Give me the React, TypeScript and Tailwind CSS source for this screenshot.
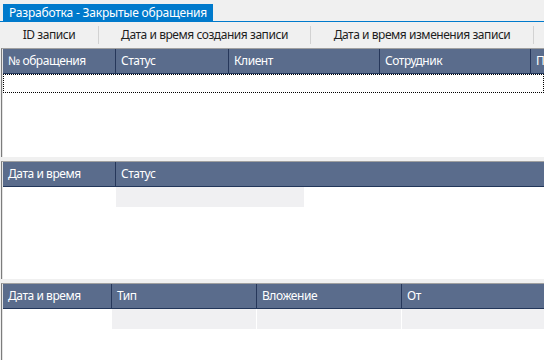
import React from 'react';

type Col = { label: string; width: number };

const mainCols: Col[] = [
    { label: '№ обращения', width: 113 },
    { label: 'Статус', width: 113 },
    { label: 'Клиент', width: 151 },
    { label: 'Сотрудник', width: 151 },
    { label: 'П', width: 60 },
];

const historyCols: Col[] = [
    { label: 'Дата и время', width: 113 },
    { label: 'Статус', width: 440 },
];

const attachCols: Col[] = [
    { label: 'Дата и время', width: 109 },
    { label: 'Тип', width: 145 },
    { label: 'Вложение', width: 145 },
    { label: 'От', width: 160 },
];

function Header({ cols }: { cols: Col[] }) {
    return (
        <div className="flex h-[25px] shrink-0 bg-[#5a6c8c] border-b border-[#22365a] text-white">
            {cols.map((c, i) => (
                <div
                    key={i}
                    style={{ width: c.width }}
                    className={`shrink-0 flex items-center px-[5px] whitespace-nowrap overflow-hidden ${i < cols.length - 1 ? 'border-r border-[#26375a]' : ''}`}
                >
                    {c.label}
                </div>
            ))}
        </div>
    );
}

function Panel({ children, height }: { children: React.ReactNode; height: string }) {
    return (
        <div className={`${height} shrink-0 flex flex-col border-t border-[#a0a0a0] ml-px border-l border-l-[#7c7c7c] overflow-hidden`}>
            <div className="flex-1 flex flex-col bg-white border-l border-l-[#e4e4e4] overflow-hidden">{children}</div>
        </div>
    );
}

export default function App() {
    const toolbar = [
        { label: 'ID записи', width: 99 },
        { label: 'Дата и время создания записи', width: 212 },
        { label: 'Дата и время изменения записи', width: 223 },
    ];

    return (
        <div className="w-[544px] h-[360px] bg-[#f0f0f0] overflow-hidden flex flex-col text-[12px] tracking-[-0.45px] text-[#1e1e1e] font-['Noto_Sans',sans-serif]">
            {/* Tab strip */}
            <div className="h-[22px] shrink-0 flex items-end pl-[3px] border-b border-[#007acc]">
                <div className="h-[17px] bg-[#007acc] text-white text-[12px] tracking-[-0.2px] leading-[17px] px-[6px] whitespace-nowrap">
                    Разработка - Закрытые обращения
                </div>
            </div>

            {/* Sort toolbar */}
            <div className="h-[26px] shrink-0 flex items-center">
                {toolbar.map((b) => (
                    <div
                        key={b.label}
                        style={{ width: b.width }}
                        className="shrink-0 h-[18px] flex items-center justify-center border-r border-[#d2d2d2] whitespace-nowrap"
                    >
                        {b.label}
                    </div>
                ))}
            </div>

            {/* Requests grid */}
            <Panel height="h-[109px]">
                <Header cols={mainCols} />
                <div className="h-[19px] border border-dotted border-black" />
            </Panel>

            <div className="h-[4px] shrink-0" />

            {/* Status history grid */}
            <Panel height="h-[118px]">
                <Header cols={historyCols} />
                <div className="flex h-[20px]">
                    <div className="w-[113px] shrink-0" />
                    <div className="w-[188px] bg-[#f0f0f2]" />
                </div>
            </Panel>

            <div className="h-[4px] shrink-0" />

            {/* Attachments grid */}
            <Panel height="flex-1">
                <Header cols={attachCols} />
                <div className="flex h-[20px]">
                    <div className="w-[109px] shrink-0" />
                    <div className="w-[144px] bg-[#f0f0f2] mr-px" />
                    <div className="w-[144px] bg-[#f0f0f2] mr-px" />
                    <div className="flex-1 bg-[#f0f0f2]" />
                </div>
            </Panel>
        </div>
    );
}
